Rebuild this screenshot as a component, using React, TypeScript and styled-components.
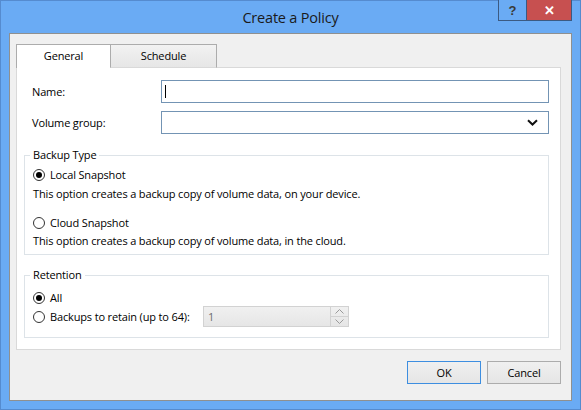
import React from "react";
import styled, { createGlobalStyle } from "styled-components";

const Global = createGlobalStyle`
  html, body { margin: 0; padding: 0; background: #6aabf4; }
  * { box-sizing: border-box; }
`;

const FONT = `"Open Sans", "Noto Sans", "Liberation Sans", sans-serif`;

const Window = styled.div`
  width: 581px;
  height: 410px;
  background: #6aabf4;
  border: 1px solid #558bcf;
  display: flex;
  flex-direction: column;
  font-family: ${FONT};
  font-size: 11px;
  letter-spacing: -0.15px;
  color: #000;
`;

const TitleBar = styled.div`
  height: 32px;
  display: grid;
  grid-template-columns: 1fr auto 1fr;
  align-items: center;
`;

const Title = styled.div`
  grid-column: 2;
  font-size: 14.5px;
  color: #1a1a1a;
  letter-spacing: -0.2px;
`;

const CaptionGroup = styled.div`
  grid-column: 3;
  justify-self: end;
  align-self: start;
  margin: -1px 8px 0 0;
  display: flex;
  border: 1px solid #3b5a82;
  border-top: none;
  height: 21px;
`;

const CaptionButton = styled.div<{ $w: number; $bg: string; $fg: string }>`
  width: ${(p) => p.$w}px;
  height: 100%;
  background: ${(p) => p.$bg};
  color: ${(p) => p.$fg};
  display: flex;
  align-items: center;
  justify-content: center;
  font-family: "Liberation Sans", sans-serif;
  font-weight: bold;
  font-size: 13px;
  & + & { border-left: 1px solid #3b5a82; }
`;

const Client = styled.div`
  flex: 1;
  margin: 0 8px 8px 8px;
  border: 1px solid #8f9090;
  background: #f0f0f0;
  padding: 10px 10px 0 6px;
  display: flex;
  flex-direction: column;
`;

const TabStrip = styled.div`
  display: flex;
  height: 24px;
  margin-bottom: -1px;
  position: relative;
  z-index: 1;
`;

const Tab = styled.div<{ $active?: boolean; $w: number }>`
  width: ${(p) => p.$w}px;
  height: 24px;
  display: flex;
  align-items: center;
  justify-content: center;
  border: 1px solid #acacac;
  border-bottom: ${(p) => (p.$active ? "none" : "1px solid #d9d9d9")};
  background: ${(p) => (p.$active ? "#ffffff" : "linear-gradient(#f2f2f2, #e6e6e6)")};
  margin-left: ${(p) => (p.$active ? "0" : "-1px")};
  padding-bottom: 2px;
`;

const Panel = styled.div`
  height: 283px;
  background: #fff;
  border: 1px solid #d9d9d9;
  padding: 12px 11px 0 7px;
  display: flex;
  flex-direction: column;
`;

const FormRow = styled.div<{ $mt?: number }>`
  display: grid;
  grid-template-columns: 129px 1fr;
  align-items: center;
  padding-left: 8px;
  margin-top: ${(p) => p.$mt ?? 0}px;
`;

const Field = styled.div`
  height: 23px;
  border: 1px solid #7394b4;
  background: #fff;
  display: flex;
  align-items: center;
  padding: 0 10px 0 3px;
  justify-content: space-between;
`;

const Caret = styled.span`
  width: 1px;
  height: 13px;
  background: #000;
`;

const Group = styled.fieldset<{ $mt: number; $pb: number }>`
  margin: ${(p) => p.$mt}px 0 0 0;
  border: 1px solid #dde3e8;
  padding: 1px 8px ${(p) => p.$pb}px 8px;
  padding-inline-start: 5px;
  min-width: 0;
`;

const Legend = styled.legend`
  padding: 0 3px;
  line-height: 16px;
`;

const GroupBody = styled.div`
  padding-left: 3px;
  display: flex;
  flex-direction: column;
`;

const RadioRow = styled.label<{ $mt?: number; $labelW?: number }>`
  display: flex;
  align-items: center;
  margin-top: ${(p) => p.$mt ?? 0}px;
  line-height: 16px;
  white-space: nowrap;
  & > span:last-of-type {
    width: ${(p) => (p.$labelW ? `${p.$labelW}px` : "auto")};
  }
`;

const Radio = styled.span<{ $checked?: boolean }>`
  width: 12px;
  height: 12px;
  border-radius: 50%;
  border: 1px solid #333;
  background: #fff;
  margin-right: 5px;
  display: flex;
  align-items: center;
  justify-content: center;
  flex: none;
  &::after {
    content: "";
    width: 6px;
    height: 6px;
    border-radius: 50%;
    background: ${(p) => (p.$checked ? "#000" : "transparent")};
  }
`;

const Desc = styled.div<{ $mt?: number }>`
  line-height: 16px;
  margin-top: ${(p) => p.$mt ?? 0}px;
`;

const Spin = styled.div`
  width: 146px;
  height: 21px;
  border: 1px solid #d2d2d2;
  background: linear-gradient(#f0f0f0, #e6e6e6);
  display: flex;
`;

const SpinValue = styled.div`
  flex: 1;
  padding-left: 4px;
  display: flex;
  align-items: center;
  color: #6d6d6d;
`;

const SpinButtons = styled.div`
  width: 18px;
  border-left: 1px solid #d2d2d2;
  display: flex;
  flex-direction: column;
`;

const SpinHalf = styled.div`
  flex: 1;
  display: flex;
  align-items: center;
  justify-content: center;
  & + & { border-top: 1px solid #d2d2d2; }
`;

const Footer = styled.div`
  display: flex;
  justify-content: flex-end;
  gap: 6px;
  padding-top: 11px;
`;

const Button = styled.div<{ $default?: boolean }>`
  width: 74px;
  height: 23px;
  border: 1px solid ${(p) => (p.$default ? "#3d8ee0" : "#acacac")};
  background: linear-gradient(#f0f0f0, #e5e5e5);
  display: flex;
  align-items: center;
  justify-content: center;
`;

const Chevron = () => (
  <svg width="11" height="7" viewBox="0 0 11 7">
    <path d="M1 1.2 L5.5 5.5 L10 1.2" fill="none" stroke="#111" strokeWidth="2" />
  </svg>
);

const SmallCaret = ({ up }: { up?: boolean }) => (
  <svg width="9" height="5" viewBox="0 0 9 5">
    <path d={up ? "M0.5 4.5 L4.5 0.5 L8.5 4.5" : "M0.5 0.5 L4.5 4.5 L8.5 0.5"} fill="none" stroke="#9a9a9a" strokeWidth="1" />
  </svg>
);

export default function App() {
  return (
    <>
      <Global />
      <Window>
        <TitleBar>
          <Title>Create a Policy</Title>
          <CaptionGroup>
            <CaptionButton $w={27} $bg="#6aabf4" $fg="#3a3a3a">?</CaptionButton>
            <CaptionButton $w={45} $bg="#c75050" $fg="#ffffff">✕</CaptionButton>
          </CaptionGroup>
        </TitleBar>
        <Client>
          <TabStrip>
            <Tab $active $w={95}>General</Tab>
            <Tab $w={107}>Schedule</Tab>
          </TabStrip>
          <Panel>
            <FormRow>
              <span>Name:</span>
              <Field>
                <Caret />
              </Field>
            </FormRow>
            <FormRow $mt={8}>
              <span>Volume group:</span>
              <Field>
                <span />
                <Chevron />
              </Field>
            </FormRow>
            <Group $mt={13} $pb={5}>
              <Legend>Backup Type</Legend>
              <GroupBody>
                <RadioRow $mt={3}>
                  <Radio $checked />
                  <span>Local Snapshot</span>
                </RadioRow>
                <Desc $mt={3}>This option creates a backup copy of volume data, on your device.</Desc>
                <RadioRow $mt={13}>
                  <Radio />
                  <span>Cloud Snapshot</span>
                </RadioRow>
                <Desc $mt={2}>This option creates a backup copy of volume data, in the cloud.</Desc>
              </GroupBody>
            </Group>
            <Group $mt={12} $pb={10}>
              <Legend>Retention</Legend>
              <GroupBody>
                <RadioRow $mt={6}>
                  <Radio $checked />
                  <span>All</span>
                </RadioRow>
                <RadioRow $mt={0} $labelW={153}>
                  <Radio />
                  <span>Backups to retain (up to 64):</span>
                  <Spin>
                    <SpinValue>1</SpinValue>
                    <SpinButtons>
                      <SpinHalf><SmallCaret up /></SpinHalf>
                      <SpinHalf><SmallCaret /></SpinHalf>
                    </SpinButtons>
                  </Spin>
                </RadioRow>
              </GroupBody>
            </Group>
          </Panel>
          <Footer>
            <Button $default>OK</Button>
            <Button>Cancel</Button>
          </Footer>
        </Client>
      </Window>
    </>
  );
}
